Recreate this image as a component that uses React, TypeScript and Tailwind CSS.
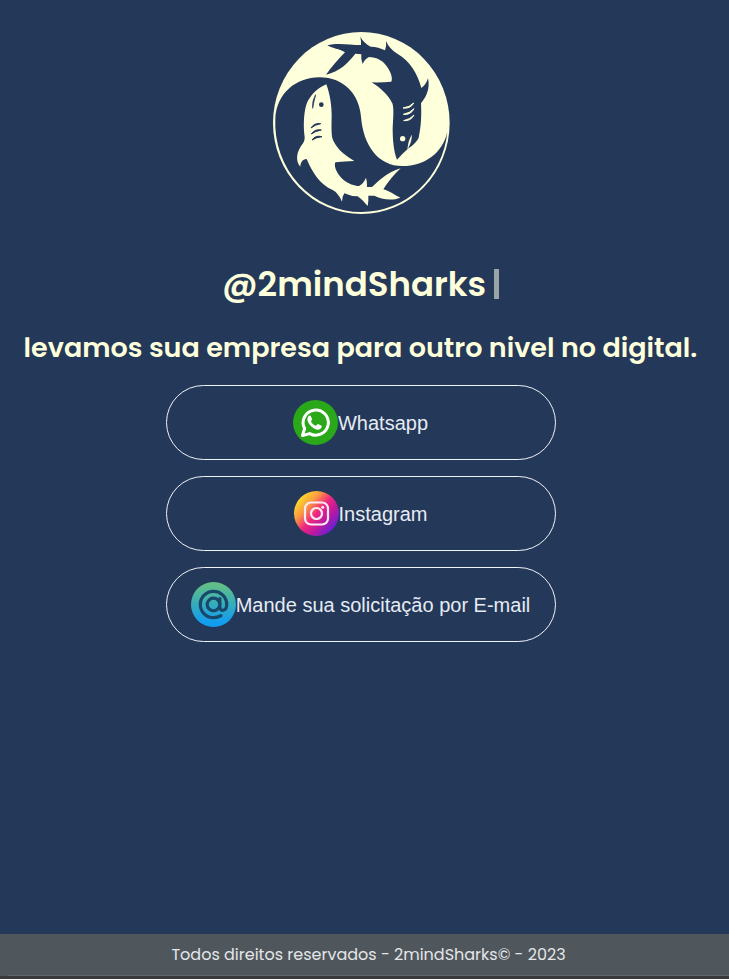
import type { ReactNode } from "react";

function SharksLogo() {
  return (
    <svg
      className="h-[195px] w-[190px]"
      viewBox="0 0 570 585"
      role="img"
      aria-label="2mindSharks"
    >
      <ellipse cx="286" cy="294" rx="265" ry="273" fill="#feffdb" />
      <path
        fill="#243859"
        d="M28 280C32 205 90 157 160 157C235 157 280 210 285 275C292 360 335 423 410 423C475 423 530 385 544 320A259 267 0 0 1 286 561A259 267 0 0 1 28 280Z"
      />
      <path
        fill="#feffdb"
        d="M181 178C193 210 197 245 197 275C196 310 196 335 202 347C215 375 240 392 265 408Q235 409 208 412C202 425 215 450 232 464C248 477 265 482 279 483Q294 474 300 458Q304 472 303 486L318 486C340 466 362 443 404 430Q374 458 352 493C372 498 385 510 403 518C375 529 345 522 325 512L307 512Q308 528 305 543Q290 524 275 514Q254 514 235 505Q228 515 228 530Q217 504 200 495C162 478 140 445 122 402C108 404 104 412 103 425C88 408 90 380 112 353Q118 345 115 328C112 300 113 255 125 229C140 203 156 190 181 178Z"
      />
      <path
        fill="#243859"
        d="M393 404C383 380 380 345 380 310C382 275 384 250 379 235C365 208 345 190 317 172Q347 173 376 170C382 158 372 133 354 114C342 102 326 97 309 96Q296 102 290 117Q284 103 286 88L268 86C246 114 220 140 180 149Q202 118 237 82C218 70 202 72 184 61C215 52 250 60 285 60Q286 48 283 35Q293 54 314 65Q338 66 357 76Q362 64 360 48Q370 72 395 87C430 107 455 145 466 189Q480 180 486 160C492 188 484 212 465 235C467 275 465 305 458 338C450 354 438 362 425 372Q408 387 393 404Z"
      />
      <circle cx="166" cy="239" r="7" fill="#243859" />
      <circle cx="410" cy="341" r="8" fill="#feffdb" />
      <path
        d="M149 209Q137 228 140 250Q143 232 149 209Z"
        fill="#243859"
        stroke="#243859"
        strokeWidth="2"
      />
      <g fill="#243859" stroke="#243859" strokeWidth="3">
        <path d="M135 309Q145 293 164 296Q147 299 135 309Z" />
        <path d="M136 327Q147 311 166 315Q148 318 136 327Z" />
        <path d="M138 345Q148 330 168 335Q150 337 138 345Z" />
      </g>
      <g fill="#feffdb" stroke="#feffdb" strokeWidth="3">
        <path d="M411 249Q434 252 443 234Q432 246 411 249Z" />
        <path d="M412 268Q434 271 444 251Q432 264 412 268Z" />
        <path d="M413 287Q434 289 444 270Q433 283 413 287Z" />
      </g>
      <path
        d="M437 331Q437 352 425 371Q427 347 437 331Z"
        fill="#feffdb"
        stroke="#feffdb"
        strokeWidth="1"
      />
    </svg>
  );
}

function WhatsappIcon() {
  return (
    <svg className="size-[45px] shrink-0" viewBox="0 0 45 45" aria-hidden="true">
      <circle cx="22.5" cy="22.5" r="22.5" fill="#2aa81a" />
      <path
        d="M9.500 35.500L11.600 28.500A12.600 12.600 0 1 1 16.600 33.600Z"
        fill="none"
        stroke="#feffff"
        strokeWidth="3"
        strokeLinejoin="round"
      />
      <path
        d="M17.700 16c-.5-.7-1.300-.6-1.900 0-3.300 3.500-.2 8 3.200 11 3.700 3.100 7.400 3.700 9.300.8 .6-1 .7-1.800-.1-2.300l-2.700-1.300c-.7-.3-1.100 0-1.500.6-.8 1.100-1.200 1.100-2.400.4-1.600-.9-2.700-2.100-3.500-3.500-.4-.8 1.200-1.500 1-2.600z"
        fill="#feffff"
      />
    </svg>
  );
}

function InstagramIcon() {
  return (
    <svg className="size-[45px] shrink-0" viewBox="0 0 45 45" aria-hidden="true">
      <defs>
        <linearGradient id="instagram" x1="0.12" y1="0.16" x2="0.88" y2="0.84">
          <stop offset="0" stopColor="#fddb2b" />
          <stop offset="0.25" stopColor="#fb9a40" />
          <stop offset="0.5" stopColor="#ee2680" />
          <stop offset="0.72" stopColor="#c0199c" />
          <stop offset="1" stopColor="#6a1fd8" />
        </linearGradient>
      </defs>
      <circle cx="22.5" cy="22.5" r="22.5" fill="url(#instagram)" />
      <g fill="none" stroke="#fdeaf4" strokeWidth="2.200">
        <rect x="11" y="11.500" width="23" height="22" rx="6" />
        <circle cx="22.500" cy="22.500" r="5.500" />
      </g>
      <circle cx="28.700" cy="16.300" r="1.500" fill="#fdeaf4" />
    </svg>
  );
}

function EmailIcon() {
  return (
    <svg className="size-[45px] shrink-0" viewBox="0 0 45 45" aria-hidden="true">
      <defs>
        <linearGradient id="email" x1="0" y1="0" x2="0" y2="1">
          <stop offset="0.05" stopColor="#63bf86" />
          <stop offset="0.5" stopColor="#35acbd" />
          <stop offset="0.9" stopColor="#129df0" />
        </linearGradient>
      </defs>
      <circle cx="22.5" cy="22.5" r="22.5" fill="url(#email)" />
      <g fill="none" stroke="#184869" strokeWidth="3.200" strokeLinecap="round">
        <circle cx="22.500" cy="22.500" r="6.300" />
        <path d="M28.800 16.500V24.500C28.800 30.300 35.700 29.500 35.700 22.500A13.200 13.200 0 1 0 22.500 35.700C25.500 35.700 28 35 30 33.700" />
      </g>
    </svg>
  );
}

function LinkButton({ href, icon, children }: { href: string; icon: ReactNode; children: ReactNode }) {
  return (
    <a
      href={href}
      className="flex h-[75px] w-full items-center justify-center rounded-full border border-[#f0f3f8] text-xl text-[#e6ebf3]"
    >
      {icon}
      <span>{children}</span>
    </a>
  );
}

export default function App() {
  return (
    <div className="flex min-h-screen flex-col bg-[#243859] font-['Poppins','Inter',sans-serif]">
      <main className="flex grow flex-col items-center pt-[25px] pr-2">
        <SharksLogo />
        <h1 className="mt-9 flex items-center gap-2 text-[34px] leading-14 font-semibold text-[#feffdb]">
          @2mindSharks
          <span className="h-[30px] w-[5px] bg-[#9aa5a5]" />
        </h1>
        <h2 className="mt-4 px-2 text-center text-[27px] leading-10 font-semibold text-[#feffdb]">
          levamos sua empresa para outro nivel no digital.
        </h2>
        <nav className="mt-[17px] flex w-full max-w-[390px] flex-col gap-4 font-['Liberation_Sans',Arial,sans-serif]">
          <LinkButton href="#whatsapp" icon={<WhatsappIcon />}>Whatsapp</LinkButton>
          <LinkButton href="#instagram" icon={<InstagramIcon />}>Instagram</LinkButton>
          <LinkButton href="#email" icon={<EmailIcon />}>Mande sua solicitação por E-mail</LinkButton>
        </nav>
      </main>
      <footer className="border-b-3 border-[#39393c] bg-[#4f565c] pl-2 text-center text-base text-[#e4e6e8]">
        <p className="border-b border-[#63676b] py-2 leading-[25px]">
          Todos direitos reservados - 2mindSharks© - 2023
        </p>
      </footer>
    </div>
  );
}
